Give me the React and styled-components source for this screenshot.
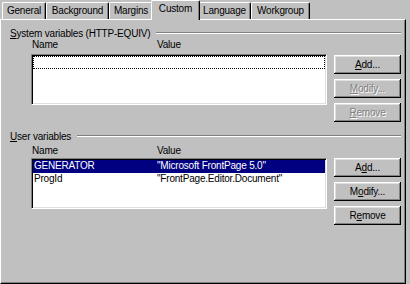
import styled, { createGlobalStyle } from "styled-components";

const Global = createGlobalStyle`
  html, body {
    margin: 0;
    padding: 0;
    background: #c0c0c0;
  }
  * {
    box-sizing: border-box;
  }
`;

const Window = styled.div`
  width: 410px;
  height: 284px;
  padding-right: 4px;
  background: #c0c0c0;
  font-family: "Liberation Sans", Arial, sans-serif;
  font-size: 10px;
  letter-spacing: -0.2px;
  color: #000;
  display: flex;
  flex-direction: column;
  overflow: hidden;
`;

const TabStrip = styled.div`
  display: flex;
  align-items: flex-end;
  height: 19px;
  padding-left: 2px;
`;

const Tab = styled.div`
  width: ${(p) => (p.$active ? p.$w + 4 : p.$w)}px;
  height: ${(p) => (p.$active ? 20 : 17)}px;
  margin: ${(p) => (p.$active ? "0 -2px -1px" : "0")};
  padding-top: ${(p) => (p.$active ? 2 : 2)}px;
  display: flex;
  justify-content: center;
  line-height: 12px;
  background: #c0c0c0;
  border-top: 1px solid #fff;
  border-left: 1px solid #fff;
  border-right: 1px solid #000;
  border-radius: 2px 2px 0 0;
  box-shadow: inset -1px 0 #808080;
  position: relative;
  z-index: ${(p) => (p.$active ? 2 : 0)};
`;

const Panel = styled.div`
  flex: 1;
  border-top: 1px solid #fff;
  border-left: 1px solid #fff;
  border-right: 1px solid #000;
  border-bottom: 1px solid #000;
  box-shadow: inset -1px -1px #808080;
  padding: 9px 4px 0 9px;
  display: flex;
  flex-direction: column;
`;

const Group = styled.div`
  display: flex;
  flex-direction: column;
  margin-top: ${(p) => p.$top || 0}px;
`;

const GroupLabel = styled.div`
  display: flex;
  align-items: flex-start;
  height: 10px;
  line-height: 10px;
  white-space: nowrap;
`;

const Etch = styled.div`
  flex: 1;
  margin: 3px 0 0 6px;
  height: 2px;
  border-top: 1px solid #808080;
  border-bottom: 1px solid #fff;
`;

const Headers = styled.div`
  display: flex;
  margin: ${(p) => p.$top || 0}px 0 0 21px;
  width: 296px;
  height: 11px;
  line-height: 11px;
  padding-left: 1px;
`;

const HeadCell = styled.div`
  width: ${(p) => p.$w || "auto"};
`;

const Body = styled.div`
  display: flex;
  align-items: flex-start;
  margin-top: ${(p) => p.$gap}px;
  margin-left: 21px;
  gap: 7px;
`;

const ListBox = styled.div`
  width: 296px;
  height: 51px;
  background: #fff;
  border-top: 1px solid #808080;
  border-left: 1px solid #808080;
  border-right: 1px solid #fff;
  border-bottom: 1px solid #fff;
  box-shadow: inset 1px 1px #000, inset -1px -1px #dfdfdf;
  padding: 1px;
  display: flex;
  flex-direction: column;
`;

const Row = styled.div`
  display: flex;
  height: 13px;
  line-height: 12px;
  padding-left: 1px;
  white-space: nowrap;
  background: ${(p) => (p.$selected ? "#000080" : "transparent")};
  color: ${(p) => (p.$selected ? "#fff" : "#000")};
  border: ${(p) => (p.$focus ? "1px dotted #000" : "none")};
`;

const Cell = styled.div`
  width: ${(p) => p.$w || "auto"};
  flex: ${(p) => (p.$w ? "none" : 1)};
`;

const Buttons = styled.div`
  display: flex;
  flex-direction: column;
  gap: 5px;
  margin-top: ${(p) => p.$top}px;
`;

const Button = styled.button`
  width: 67px;
  height: 19px;
  padding: 0;
  border: none;
  background: #c0c0c0;
  font: inherit;
  letter-spacing: inherit;
  line-height: 13px;
  color: ${(p) => (p.disabled ? "#808080" : "#000")};
  text-shadow: ${(p) => (p.disabled ? "1px 1px 0 #fff" : "none")};
  box-shadow: inset -1px -1px #000, inset 1px 1px #fff, inset -2px -2px #808080,
    inset 2px 2px #dfdfdf;
`;

const tabs = [
  { label: "General", w: 44 },
  { label: "Background", w: 63 },
  { label: "Margins", w: 44 },
  { label: "Custom", w: 45, active: true },
  { label: "Language", w: 53 },
  { label: "Workgroup", w: 59 },
];

function Hot({ text, at }) {
  return (
    <>
      {text.slice(0, at)}
      <u>{text[at]}</u>
      {text.slice(at + 1)}
    </>
  );
}

function Section({ title, rows, keys, top, headTop, gap, btnTop }) {
  return (
    <Group $top={top}>
      <GroupLabel>
        <span>
          <Hot text={title} at={0} />
        </span>
        <Etch />
      </GroupLabel>
      <Headers $top={headTop}>
        <HeadCell $w="125px">Name</HeadCell>
        <HeadCell>Value</HeadCell>
      </Headers>
      <Body $gap={gap}>
        <ListBox>
          {rows.map((r, i) => (
            <Row key={i} $selected={r.selected} $focus={r.focus}>
              <Cell $w="123px">{r.name}</Cell>
              <Cell>{r.value}</Cell>
            </Row>
          ))}
        </ListBox>
        <Buttons $top={btnTop}>
          {keys.map((k) => (
            <Button key={k.label} disabled={k.off}>
              <Hot text={k.label} at={k.u} />
            </Button>
          ))}
        </Buttons>
      </Body>
    </Group>
  );
}

export default function App() {
  return (
    <Window>
      <Global />
      <TabStrip>
        {tabs.map((t) => (
          <Tab key={t.label} $w={t.w} $active={t.active}>
            {t.label}
          </Tab>
        ))}
      </TabStrip>
      <Panel>
        <Section
          title="System variables (HTTP-EQUIV)"
          top={0}
          headTop={0}
          gap={4}
          btnTop={1}
          rows={[{ name: "", value: "", focus: true }]}
          keys={[
            { label: "Add...", u: 0 },
            { label: "Modify...", u: 0, off: true },
            { label: "Remove", u: 0, off: true },
          ]}
        />
        <Section
          title="User variables"
          top={10}
          headTop={3}
          gap={2}
          btnTop={0}
          rows={[
            { name: "GENERATOR", value: '"Microsoft FrontPage 5.0"', selected: true },
            { name: "ProgId", value: '"FrontPage.Editor.Document"' },
          ]}
          keys={[
            { label: "Add...", u: 1 },
            { label: "Modify...", u: 1 },
            { label: "Remove", u: 1 },
          ]}
        />
      </Panel>
    </Window>
  );
}
